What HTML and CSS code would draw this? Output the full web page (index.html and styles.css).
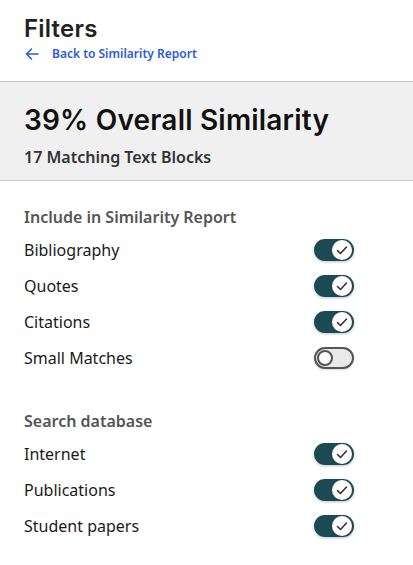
FILE: index.html
```html
<!DOCTYPE html>
<html>
<head>
<meta charset="utf-8">
<link rel="stylesheet" href="styles.css">
</head>
<body>
<div class="head">
  <h1 class="title">Filters</h1>
  <a class="back" href="#">
    <svg width="16" height="16" viewBox="0 0 16 16"><path d="M14 8H2.5M7.5 3L2.5 8l5 5" fill="none" stroke="#2a5bd7" stroke-width="1.6" stroke-linecap="round" stroke-linejoin="round"/></svg>
    <span>Back to Similarity Report</span>
  </a>
</div>
<div class="band">
  <div class="overall">39% Overall Similarity</div>
  <div class="blocks">17 Matching Text Blocks</div>
</div>
<div class="section">
  <div class="sec-title">Include in Similarity Report</div>
  <div class="row"><span>Bibliography</span><span class="tog on"><span class="knob"><svg width="20" height="20" viewBox="0 0 20 20"><path d="M5.5 10.5l3 3 6-6.5" fill="none" stroke="#333" stroke-width="1.6" stroke-linecap="round" stroke-linejoin="round"/></svg></span></span></div>
  <div class="row"><span>Quotes</span><span class="tog on"><span class="knob"><svg width="20" height="20" viewBox="0 0 20 20"><path d="M5.5 10.5l3 3 6-6.5" fill="none" stroke="#333" stroke-width="1.6" stroke-linecap="round" stroke-linejoin="round"/></svg></span></span></div>
  <div class="row"><span>Citations</span><span class="tog on"><span class="knob"><svg width="20" height="20" viewBox="0 0 20 20"><path d="M5.5 10.5l3 3 6-6.5" fill="none" stroke="#333" stroke-width="1.6" stroke-linecap="round" stroke-linejoin="round"/></svg></span></span></div>
  <div class="row"><span>Small Matches</span><span class="tog off"><span class="knob"></span></span></div>
</div>
<div class="section second">
  <div class="sec-title">Search database</div>
  <div class="row"><span>Internet</span><span class="tog on"><span class="knob"><svg width="20" height="20" viewBox="0 0 20 20"><path d="M5.5 10.5l3 3 6-6.5" fill="none" stroke="#333" stroke-width="1.6" stroke-linecap="round" stroke-linejoin="round"/></svg></span></span></div>
  <div class="row"><span>Publications</span><span class="tog on"><span class="knob"><svg width="20" height="20" viewBox="0 0 20 20"><path d="M5.5 10.5l3 3 6-6.5" fill="none" stroke="#333" stroke-width="1.6" stroke-linecap="round" stroke-linejoin="round"/></svg></span></span></div>
  <div class="row"><span>Student papers</span><span class="tog on"><span class="knob"><svg width="20" height="20" viewBox="0 0 20 20"><path d="M5.5 10.5l3 3 6-6.5" fill="none" stroke="#333" stroke-width="1.6" stroke-linecap="round" stroke-linejoin="round"/></svg></span></span></div>
</div>
</body>
</html>
```
FILE: styles.css
```css
* { box-sizing: border-box; }
body {
  margin: 0;
  background: #fff;
  font-family: "Noto Sans", "Open Sans", sans-serif;
  color: #1a1a1a;
  width: 413px;
}
.head { padding: 14px 24px 0; height: 81px; }
.title {
  margin: 0;
  font-family: "Inter", sans-serif;
  font-weight: 600;
  font-size: 24px;
  line-height: 30px;
  color: #222;
  letter-spacing: 0.2px;
}
.back {
  display: flex;
  align-items: center;
  gap: 12px;
  margin-top: 1px;
  color: #2a5bd7;
  text-decoration: none;
  font-size: 12px;
  font-weight: 600;
  line-height: 18px;
}
.back svg { display: block; }
.band {
  background: #f0f0f0;
  border-top: 1px solid #c8c8c8;
  border-bottom: 1px solid #c8c8c8;
  height: 100px;
  padding: 19px 24px 0;
}
.overall {
  font-family: "Inter", sans-serif;
  font-weight: 600;
  font-size: 28px;
  line-height: 38px;
  color: #111;
  letter-spacing: 0.2px;
}
.blocks {
  margin-top: 7px;
  font-size: 16px;
  font-weight: 600;
  color: #333;
  line-height: 22px;
}
.section { padding: 25px 24px 0 24px; }
.section.second { padding-top: 34px; }
.sec-title {
  font-size: 16px;
  font-weight: 600;
  color: #555;
  line-height: 22px;
  margin-bottom: 4px;
}
.row {
  display: flex;
  justify-content: space-between;
  align-items: center;
  height: 36px;
  font-size: 16px;
  color: #1a1a1a;
  padding-right: 35px;
}
.tog {
  width: 40px;
  height: 22px;
  border-radius: 11px;
  display: flex;
  align-items: center;
  padding: 0 2px;
  box-shadow: 0 1px 3px rgba(0,0,0,0.25);
}
.tog.on { background: #1b4a53; justify-content: flex-end; }
.tog.off { background: #e9e9e9; border: 2px solid #555; padding: 0 1px; box-shadow: 0 1px 2px rgba(0,0,0,0.15); }
.knob {
  width: 20px;
  height: 20px;
  border-radius: 50%;
  background: #fff;
  display: flex;
  align-items: center;
  justify-content: center;
}
.knob svg { display: block; }
.tog.off .knob { width: 16px; height: 16px; border: 2px solid #555; }
```
